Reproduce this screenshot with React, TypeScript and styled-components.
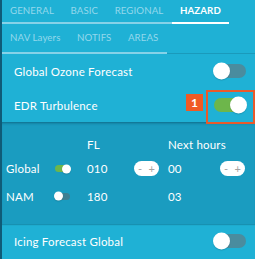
import React from 'react';
import styled, { createGlobalStyle } from 'styled-components';

const GlobalStyle = createGlobalStyle`
  html, body { margin: 0; padding: 0; background: #1fb1d5; }
  body { font-family: Lato, "Open Sans", sans-serif; }
`;

const Panel = styled.div`
  width: 255px;
  height: 259px;
  overflow: hidden;
  box-sizing: border-box;
  background: #1fb1d5;
  border-left: 2px solid #0f5b77;
  color: #fff;
  font-family: Lato, "Open Sans", sans-serif;
  font-size: 11.5px;
`;

const TabRow = styled.div<{ $rule?: boolean }>`
  display: flex;
  height: ${p => (p.$rule ? '29px' : '23px')};
  border-bottom: 1px solid ${p => (p.$rule ? '#1a9abb' : 'transparent')};
  box-sizing: content-box;
`;

const Tab = styled.div<{ $active?: boolean }>`
  display: flex;
  align-items: center;
  padding: 0 8.5px 2px 8px;
  margin-bottom: -1px;
  font-size: 9.7px;
  letter-spacing: 0.1px;
  white-space: nowrap;
  font-weight: ${p => (p.$active ? 700 : 400)};
  color: ${p => (p.$active ? '#ffffff' : '#94d8ec')};
  border-bottom: 2px solid ${p => (p.$active ? '#ffffff' : '#86d2e8')};
`;

const Row = styled.div`
  display: flex;
  align-items: center;
  justify-content: space-between;
  height: 34px;
  padding: 0 9px 0 12px;
  letter-spacing: 0.2px;
`;

const Track = styled.div<{ $on?: boolean; $small?: boolean }>`
  position: relative;
  width: ${p => (p.$small ? '15px' : '32px')};
  height: ${p => (p.$small ? '7px' : '14px')};
  border-radius: 8px;
  background: ${p => (p.$on ? '#6db64b' : p.$small ? '#3e7f92' : '#4a8c9e')};
  margin: ${p => (p.$small ? '0 0 0 1px' : '0')};
`;

const Knob = styled.div<{ $on?: boolean; $small?: boolean }>`
  position: absolute;
  top: 50%;
  width: ${p => (p.$small ? '9px' : '17px')};
  height: ${p => (p.$small ? '9px' : '17px')};
  border-radius: 50%;
  background: #fff;
  transform: translateY(-50%);
  ${p => (p.$on ? 'right: -1px;' : 'left: -1px;')}
  box-shadow: 0 1px 1px rgba(0, 0, 0, 0.15);
`;

const ToggleArea = styled.div`
  position: relative;
  display: flex;
  align-items: center;
`;

const Highlight = styled.div`
  position: absolute;
  left: -8px;
  right: -9px;
  top: -8px;
  bottom: -12px;
  border: 2px solid #e95a2b;
  box-sizing: border-box;
  pointer-events: none;
`;

const Badge = styled.div`
  position: absolute;
  left: -28px;
  top: -4px;
  width: 17px;
  height: 17px;
  background: #f05a24;
  color: #fff;
  font-weight: 700;
  font-size: 12px;
  display: flex;
  align-items: center;
  justify-content: center;
`;

const Section = styled.div`
  height: 102px;
  background: #1a9cc0;
  box-shadow: inset 0 3px 3px -2px rgba(0, 40, 60, 0.45), 0 1px 1px rgba(0, 50, 70, 0.25);
  display: grid;
  grid-template-columns: 48px 33px 47px 34px 52px 1fr;
  grid-template-rows: 21px 27px 28px;
  align-items: center;
  padding: 12px 0 0 4px;
  box-sizing: border-box;
  letter-spacing: 0.2px;
  white-space: nowrap;
`;

const Cell = styled.div<{ $col?: string }>`
  grid-column: ${p => p.$col ?? 'auto'};
  display: flex;
  align-items: center;
`;

const Stepper = styled.div`
  width: 25px;
  height: 15px;
  border-radius: 8px;
  background: #fff;
  color: #a3a3a3;
  font-size: 11px;
  display: flex;
  align-items: center;
  justify-content: space-between;
  padding: 0 4px 1px 4px;
  box-sizing: border-box;
`;

function Toggle({ on, small }: { on?: boolean; small?: boolean }) {
  return (
    <Track $on={on} $small={small}>
      <Knob $on={on} $small={small} />
    </Track>
  );
}

export default function App() {
  return (
    <>
      <GlobalStyle />
      <Panel>
        <TabRow>
          <Tab>GENERAL</Tab>
          <Tab>BASIC</Tab>
          <Tab>REGIONAL</Tab>
          <Tab $active>HAZARD</Tab>
        </TabRow>
        <TabRow $rule>
          <Tab>NAV Layers</Tab>
          <Tab>NOTIFS</Tab>
          <Tab>AREAS</Tab>
        </TabRow>
        <Row>
          <span>Global Ozone Forecast</span>
          <ToggleArea>
            <Toggle />
          </ToggleArea>
        </Row>
        <Row>
          <span>EDR Turbulence</span>
          <ToggleArea>
            <Toggle on />
            <Highlight />
            <Badge>1</Badge>
          </ToggleArea>
        </Row>
        <Section>
          <Cell $col="3">FL</Cell>
          <Cell $col="5 / 7">Next hours</Cell>
          <Cell $col="1">Global</Cell>
          <Cell><Toggle on small /></Cell>
          <Cell>010</Cell>
          <Cell><Stepper><span>-</span><span>+</span></Stepper></Cell>
          <Cell>00</Cell>
          <Cell><Stepper><span>-</span><span>+</span></Stepper></Cell>
          <Cell $col="1">NAM</Cell>
          <Cell><Toggle small /></Cell>
          <Cell>180</Cell>
          <Cell />
          <Cell>03</Cell>
        </Section>
        <Row>
          <span>Icing Forecast Global</span>
          <ToggleArea>
            <Toggle />
          </ToggleArea>
        </Row>
      </Panel>
    </>
  );
}
